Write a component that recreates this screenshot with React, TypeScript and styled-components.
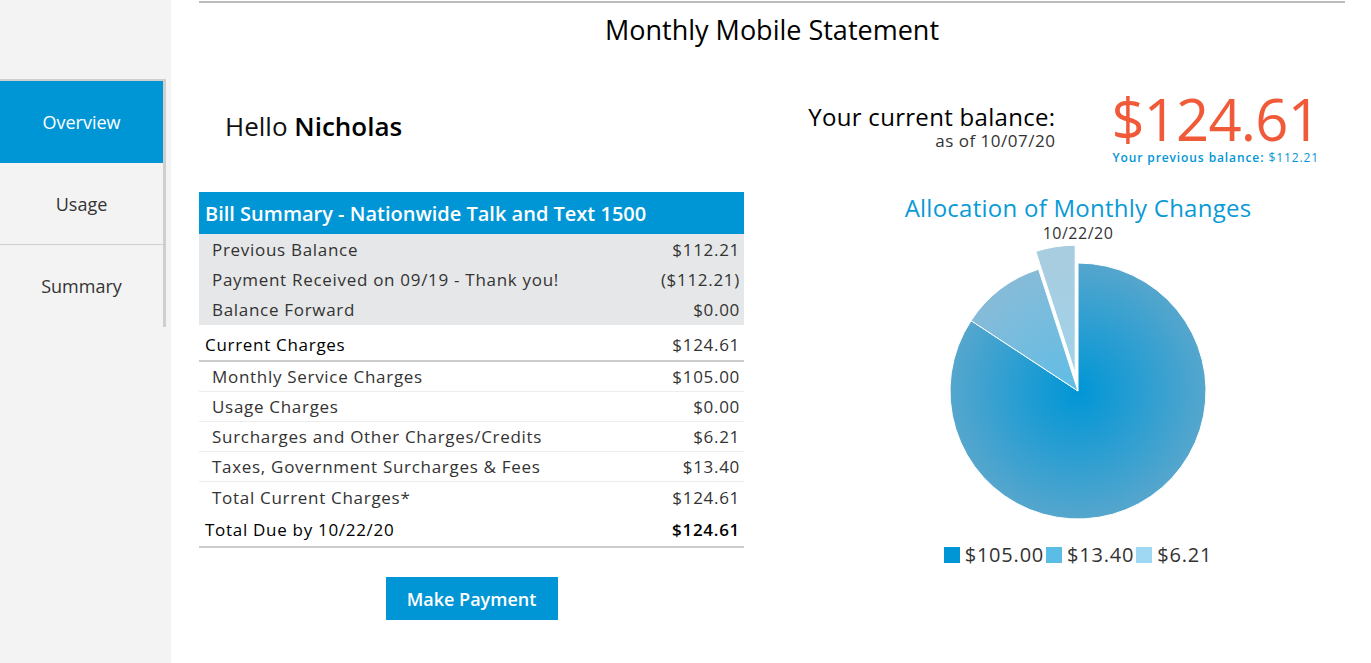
import styled, { createGlobalStyle } from "styled-components";

const GlobalStyle = createGlobalStyle`
  html, body {
    margin: 0;
    padding: 0;
    background: #fff;
    font-family: "Open Sans", "Liberation Sans", sans-serif;
    color: #333;
  }
  * { box-sizing: border-box; }
`;

const navItems = ["Overview", "Usage", "Summary"];

const previousRows = [
  { label: "Previous Balance", value: "$112.21" },
  { label: "Payment Received on 09/19 - Thank you!", value: "($112.21)" },
  { label: "Balance Forward", value: "$0.00" },
];

const chargeRows = [
  { label: "Monthly Service Charges", value: "$105.00" },
  { label: "Usage Charges", value: "$0.00" },
  { label: "Surcharges and Other Charges/Credits", value: "$6.21" },
  { label: "Taxes, Government Surcharges & Fees", value: "$13.40" },
  { label: "Total Current Charges*", value: "$124.61" },
];

const slices = [
  { amount: 105.0, label: "$105.00", inner: "#0096d6", outer: "#55a6cd", legend: "#0096d6", pull: 0 },
  { amount: 13.4, label: "$13.40", inner: "#5fbde6", outer: "#86bbd8", legend: "#5bbde6", pull: 0 },
  { amount: 6.21, label: "$6.21", inner: "#9fd4ec", outer: "#a8cde0", legend: "#9ed8f2", pull: 18 },
];

const CX = 150;
const CY = 150;
const R = 128;

const polar = (deg: number, r: number, ox = 0, oy = 0) => {
  const a = (deg * Math.PI) / 180;
  return [CX + ox + r * Math.sin(a), CY + oy - r * Math.cos(a)];
};

const PieChart = () => {
  const total = slices.reduce((s, x) => s + x.amount, 0);
  let start = 0;
  return (
    <svg width="300" height="300" viewBox="0 0 300 300">
      <defs>
        {slices.map((s, i) => (
          <radialGradient
            key={i}
            id={`slice-${i}`}
            gradientUnits="userSpaceOnUse"
            cx={CX}
            cy={CY}
            r={R}
          >
            <stop offset="0" stopColor={s.inner} />
            <stop offset="1" stopColor={s.outer} />
          </radialGradient>
        ))}
      </defs>
      {slices.map((s, i) => {
        const sweep = (s.amount / total) * 360;
        const end = start + sweep;
        const mid = start + sweep / 2;
        const rad = (mid * Math.PI) / 180;
        const ox = s.pull * Math.sin(rad);
        const oy = -s.pull * Math.cos(rad);
        const [x1, y1] = polar(start, R, ox, oy);
        const [x2, y2] = polar(end, R, ox, oy);
        const large = sweep > 180 ? 1 : 0;
        const d = `M ${CX + ox} ${CY + oy} L ${x1} ${y1} A ${R} ${R} 0 ${large} 1 ${x2} ${y2} Z`;
        start = end;
        return <path key={i} d={d} fill={`url(#slice-${i})`} stroke="#fff" strokeWidth={1} />;
      })}
    </svg>
  );
};

const App = () => {
  return (
    <>
      <GlobalStyle />
      <Page>
        <Sidebar>
          <Nav>
            {navItems.map((item, i) => (
              <NavItem key={item} $active={i === 0}>
                {item}
              </NavItem>
            ))}
          </Nav>
        </Sidebar>

        <Main>
          <TopRule />
          <PageTitle>Monthly Mobile Statement</PageTitle>

          <Columns>
            <LeftColumn>
              <Greeting>
                Hello <strong>Nicholas</strong>
              </Greeting>

              <SummaryTable>
                <TableHeader>Bill Summary - Nationwide Talk and Text 1500</TableHeader>
                <GrayBlock>
                  {previousRows.map((r) => (
                    <Row key={r.label} $indent>
                      <span>{r.label}</span>
                      <span>{r.value}</span>
                    </Row>
                  ))}
                </GrayBlock>
                <HeadRow>
                  <span>Current Charges</span>
                  <span>$124.61</span>
                </HeadRow>
                {chargeRows.map((r, i) => (
                  <Row key={r.label} $indent $line={i < chargeRows.length - 1}>
                    <span>{r.label}</span>
                    <span>{r.value}</span>
                  </Row>
                ))}
                <TotalRow>
                  <span>Total Due by 10/22/20</span>
                  <strong>$124.61</strong>
                </TotalRow>
              </SummaryTable>

              <PayButton>Make Payment</PayButton>
            </LeftColumn>

            <RightColumn>
              <BalanceRow>
                <BalanceLabel>
                  <BalanceTitle>Your current balance:</BalanceTitle>
                  <BalanceDate>as of 10/07/20</BalanceDate>
                </BalanceLabel>
                <BalanceAmountBox>
                  <BalanceAmount>$124.61</BalanceAmount>
                  <PreviousBalance>
                    <b>Your previous balance:</b> $112.21
                  </PreviousBalance>
                </BalanceAmountBox>
              </BalanceRow>

              <ChartBox>
                <ChartTitle>Allocation of Monthly Changes</ChartTitle>
                <ChartDate>10/22/20</ChartDate>
                <PieChart />
                <Legend>
                  {slices.map((s) => (
                    <LegendItem key={s.label}>
                      <Swatch $color={s.legend} />
                      {s.label}
                    </LegendItem>
                  ))}
                </Legend>
              </ChartBox>
            </RightColumn>
          </Columns>
        </Main>
      </Page>
    </>
  );
};

export default App;

const Page = styled.div`
  display: flex;
  width: 1371px;
  height: 663px;
  overflow: hidden;
`;

const Sidebar = styled.aside`
  width: 171px;
  flex-shrink: 0;
  background: #f3f3f3;
  padding-top: 79px;
`;

const Nav = styled.nav`
  width: 166px;
  border-top: 2px solid #cfcfcf;
  border-right: 3px solid #cfcfcf;
`;

const NavItem = styled.div<{ $active?: boolean }>`
  height: 82px;
  display: flex;
  align-items: center;
  justify-content: center;
  font-size: 18px;
  color: ${(p) => (p.$active ? "#fff" : "#333")};
  background: ${(p) => (p.$active ? "#0096d6" : "#f3f3f3")};
  border-bottom: 1px solid ${(p) => (p.$active ? "#0096d6" : "#d0d0d0")};

  &:last-child {
    border-bottom: none;
  }
`;

const Main = styled.main`
  flex: 1;
  padding: 1px 26px 0 28px;
`;

const TopRule = styled.div`
  height: 2px;
  background: #bdbdbd;
`;

const PageTitle = styled.h1`
  margin: 10px 0 0;
  text-align: center;
  font-size: 27px;
  font-weight: 400;
  color: #000;
  line-height: 34px;
`;

const Columns = styled.div`
  display: flex;
  justify-content: space-between;
`;

const LeftColumn = styled.section`
  width: 545px;
  display: flex;
  flex-direction: column;
`;

const Greeting = styled.div`
  margin: 62px 0 0 26px;
  font-size: 26px;
  color: #111;
  line-height: 34px;

  strong {
    font-weight: 600;
    color: #000;
  }
`;

const SummaryTable = styled.div`
  margin-top: 49px;
  display: flex;
  flex-direction: column;
`;

const TableHeader = styled.div`
  height: 42px;
  background: #0096d6;
  color: #fff;
  font-size: 20px;
  font-weight: 600;
  display: flex;
  align-items: center;
  padding-left: 6px;
`;

const GrayBlock = styled.div`
  background: #e6e7e8;
  padding-bottom: 1px;
`;

const Row = styled.div<{ $indent?: boolean; $line?: boolean }>`
  height: 30px;
  display: flex;
  align-items: center;
  justify-content: space-between;
  padding: 0 4px 0 ${(p) => (p.$indent ? "13px" : "6px")};
  font-size: 17px;
  letter-spacing: 0.7px;
  color: #333;
  border-bottom: ${(p) => (p.$line ? "1px solid #ececec" : "none")};
`;

const HeadRow = styled(Row)`
  margin-top: 4px;
  height: 33px;
  color: #000;
  padding-left: 6px;
  border-bottom: 2px solid #cccccc;

  span:last-child {
    color: #333;
  }
`;

const TotalRow = styled(Row)`
  height: 36px;
  color: #000;
  padding-left: 6px;
  border-bottom: 2px solid #cccccc;

  strong {
    font-weight: 600;
  }
`;

const PayButton = styled.button`
  align-self: center;
  margin-top: 29px;
  width: 172px;
  height: 43px;
  border: none;
  background: #0096d6;
  color: #fff;
  font-family: inherit;
  font-size: 18px;
  font-weight: 600;
  cursor: pointer;
`;

const RightColumn = styled.section`
  width: 536px;
  display: flex;
  flex-direction: column;
`;

const BalanceRow = styled.div`
  margin-top: 47px;
  display: flex;
  justify-content: flex-end;
  align-items: flex-start;
  gap: 56px;
  padding-right: 25px;
  white-space: nowrap;
`;

const BalanceLabel = styled.div`
  flex-shrink: 0;
  display: flex;
  flex-direction: column;
  align-items: flex-end;
  padding-top: 8px;
`;

const BalanceTitle = styled.div`
  font-size: 24px;
  letter-spacing: 0.3px;
  color: #000;
  line-height: 30px;
`;

const BalanceDate = styled.div`
  font-size: 17px;
  letter-spacing: 0.5px;
  color: #333;
  line-height: 18px;
`;

const BalanceAmountBox = styled.div`
  flex-shrink: 0;
  display: flex;
  flex-direction: column;
  align-items: flex-end;
`;

const BalanceAmount = styled.div`
  margin-top: -4px;
  font-size: 58px;
  line-height: 58px;
  color: #f05a38;
  letter-spacing: -0.8px;
`;

const PreviousBalance = styled.div`
  font-size: 12px;
  line-height: 14px;
  margin-top: 3px;
  letter-spacing: 0.9px;
  color: #0096d6;
  margin-right: 1px;

  b {
    font-weight: 600;
  }
`;

const ChartBox = styled.div`
  margin-top: 28px;
  display: flex;
  flex-direction: column;
  align-items: center;
  margin-left: 2px;
`;

const ChartTitle = styled.div`
  font-size: 24px;
  color: #0a9ad6;
  line-height: 30px;
  letter-spacing: 0.25px;
`;

const ChartDate = styled.div`
  font-size: 16px;
  letter-spacing: 0.5px;
  color: #333;
  line-height: 20px;
  margin-bottom: -2px;
`;

const Legend = styled.div`
  display: flex;
  align-items: center;
  gap: 2px;
  margin-top: 0;
`;

const LegendItem = styled.div`
  display: flex;
  align-items: center;
  gap: 5px;
  font-size: 20px;
  letter-spacing: 0.8px;
  color: #333;
`;

const Swatch = styled.span<{ $color: string }>`
  width: 16px;
  height: 16px;
  background: ${(p) => p.$color};
`;
